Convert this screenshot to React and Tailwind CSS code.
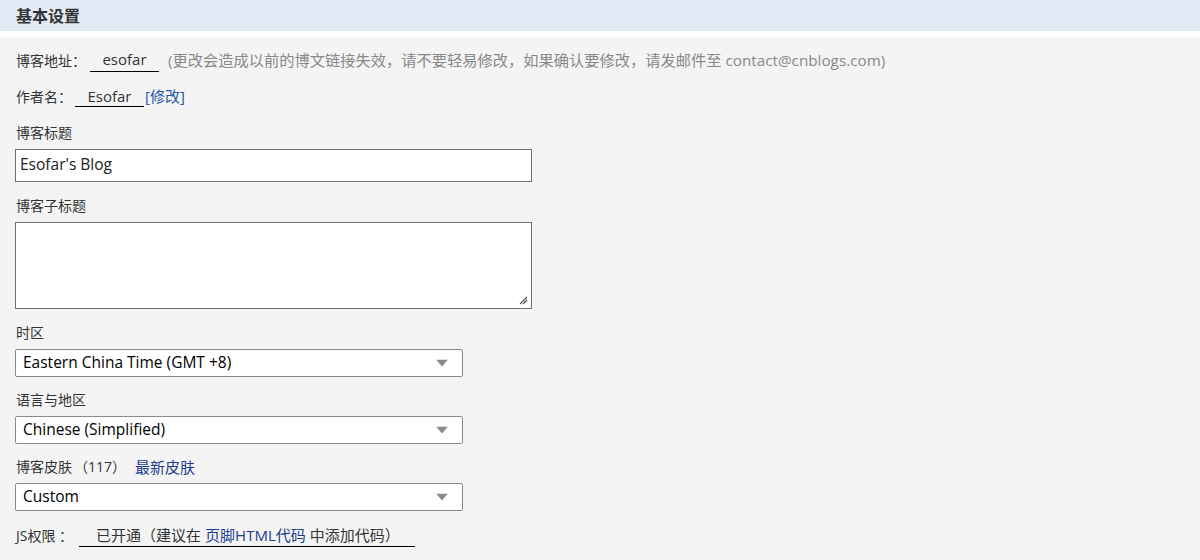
import React from 'react'

const font = { fontFamily: '"Segoe UI", "Open Sans", "Noto Sans CJK SC", sans-serif' }

const Arrow = () => (
  <svg width="12" height="7" viewBox="0 0 12 7" className="absolute right-[14px] top-1/2 -translate-y-1/2">
    <path d="M0 0 L12 0 L6 7 Z" fill="#8a8a8a" />
  </svg>
)

const Select = ({ value }) => (
  <div className="relative mt-[6px] ml-[-1px] w-[448px] h-[28px] bg-white border border-[#8a8a8a] rounded-[2px] flex items-center pl-[7px] text-[15.5px] text-black">
    {value}
    <Arrow />
  </div>
)

const Label = ({ children, className = '' }) => (
  <div className={`leading-[20px] text-[14px] text-[#333] ${className}`}>{children}</div>
)

export default function App() {
  return (
    <div className="w-[1200px] h-[560px] bg-[#f4f4f4] overflow-hidden" style={font}>
      <div className="h-[31px] bg-[#e3ebf6] flex items-center pl-[16px] text-[16px] font-bold text-[#333]">
        基本设置
      </div>
      <div className="h-[6px] bg-white" />

      <div className="pl-[16px]">
        {/* 博客地址 */}
        <div className="flex items-center mt-[11px] text-[14px]">
          <span className="text-[#333]">博客地址：</span>
          <span className="ml-[4px] w-[69px] h-[24px] border-b border-black flex items-center justify-center text-[15px] text-[#333]">esofar</span>
          <span className="ml-[9px] text-[15.25px] text-[#888]">(更改会造成以前的博文链接失效，请不要轻易修改，如果确认要修改，请发邮件至 contact@cnblogs.com)</span>
        </div>

        {/* 作者名 */}
        <div className="flex items-center mt-[13px] text-[14px]">
          <span className="text-[#333]">作者名：</span>
          <span className="ml-[3px] w-[69px] h-[22px] border-b border-black flex items-center justify-center text-[15px] text-[#333]">Esofar</span>
          <a className="ml-[1px] text-[15px] text-[#2358a8]">[修改]</a>
        </div>

        <Label className="mt-[15px]">博客标题</Label>
        <div className="mt-[6px] ml-[-1px] w-[517px] h-[33px] bg-white border border-[#707070] flex items-center pl-[4px] text-[15.5px] text-[#222]">
          Esofar's Blog
        </div>

        <Label className="mt-[14px]">博客子标题</Label>
        <div className="relative mt-[6px] ml-[-1px] w-[517px] h-[87px] bg-white border border-[#707070]">
          <svg width="9" height="9" viewBox="0 0 9 9" className="absolute right-[3px] bottom-[3px]">
            <path d="M1 8 L8 1 M4 8 L8 4" stroke="#555" strokeWidth="1.2" />
          </svg>
        </div>

        <Label className="mt-[14px]">时区</Label>
        <Select value="Eastern China Time (GMT +8)" />

        <Label className="mt-[13px]">语言与地区</Label>
        <Select value="Chinese (Simplified)" />

        <Label className="mt-[13px] flex items-center">
          <span>博客皮肤</span>
          <span className="ml-[2px]">（117）</span>
          <a className="ml-[9px] text-[15px] text-[#1d3c8f]">最新皮肤</a>
        </Label>
        <Select value="Custom" />

        <div className="flex items-center mt-[14px] text-[14px] text-[#333]">
          <span>JS权限 ：</span>
          <span className="ml-[6px] w-[336px] h-[22px] border-b border-black flex items-center pl-[17px] text-[15px]">
            已开通（建议在<a className="mx-[4px] text-[#1d3c8f]">页脚HTML代码</a>中添加代码）
          </span>
        </div>
      </div>
    </div>
  )
}
